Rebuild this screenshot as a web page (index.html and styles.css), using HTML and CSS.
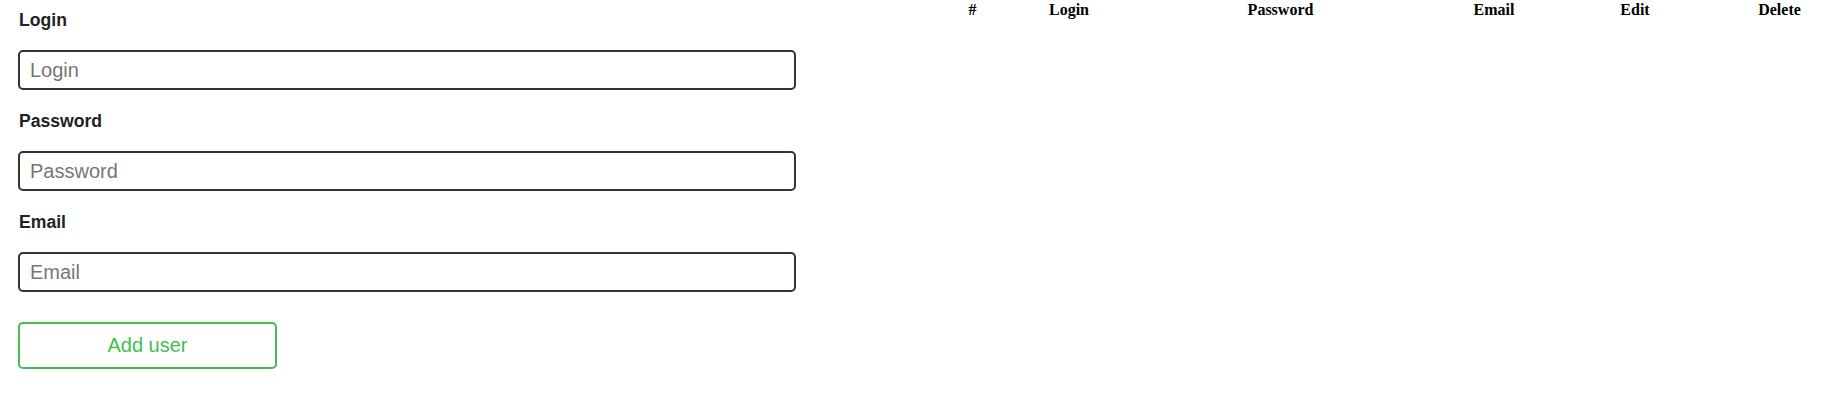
FILE: index.html
```html
<!DOCTYPE html>
<html lang="en">
<head>
<meta charset="utf-8">
<title>Users</title>
<link rel="stylesheet" href="styles.css">
</head>
<body>
<div class="page">
  <form class="user-form">
    <div class="field">
      <label class="field-label" for="login">Login</label>
      <input class="field-input" id="login" type="text" placeholder="Login">
    </div>
    <div class="field">
      <label class="field-label" for="password">Password</label>
      <input class="field-input" id="password" type="password" placeholder="Password">
    </div>
    <div class="field">
      <label class="field-label" for="email">Email</label>
      <input class="field-input" id="email" type="email" placeholder="Email">
    </div>
    <button class="add-btn" type="button">Add user</button>
  </form>
  <div class="table-wrap">
    <table class="users-table">
      <colgroup>
        <col class="col-id">
        <col class="col-login">
        <col class="col-password">
        <col class="col-email">
        <col class="col-edit">
        <col class="col-delete">
      </colgroup>
      <thead>
        <tr>
          <th class="th-id">#</th>
          <th>Login</th>
          <th>Password</th>
          <th>Email</th>
          <th>Edit</th>
          <th>Delete</th>
        </tr>
      </thead>
      <tbody></tbody>
    </table>
  </div>
</div>
</body>
</html>
```

FILE: styles.css
```css
html, body {
  margin: 0;
  padding: 0;
  background: #ffffff;
}

.page {
  display: grid;
  grid-template-columns: 1fr 1fr;
  width: 1828px;
}

.user-form {
  display: flex;
  flex-direction: column;
  align-items: flex-start;
  padding: 10px 0 0 18px;
  font-family: "Liberation Sans", Arial, sans-serif;
}

.field {
  display: flex;
  flex-direction: column;
  margin-bottom: 21px;
}

.field-label {
  font-size: 17.6px;
  line-height: 20px;
  font-weight: bold;
  color: #222222;
  margin-bottom: 20px;
  padding-left: 1px;
}

.field-input {
  box-sizing: border-box;
  width: 778px;
  height: 40px;
  margin: 0;
  padding: 5px 10px;
  border: 2px solid #333333;
  border-radius: 5px;
  font-family: "Liberation Sans", Arial, sans-serif;
  font-size: 20px;
  color: #212529;
  background: #ffffff;
  outline: none;
}

.field-input::placeholder {
  color: #767676;
  opacity: 1;
}

.add-btn {
  box-sizing: border-box;
  width: 259px;
  height: 47px;
  margin-top: 9px;
  padding: 0;
  border: 2px solid #46bd4f;
  border-radius: 5px;
  background: #ffffff;
  color: #46bd4f;
  font-family: "Liberation Sans", Arial, sans-serif;
  font-size: 20px;
  cursor: pointer;
}

.table-wrap {
  min-width: 0;
}

.users-table {
  width: 914px;
  table-layout: fixed;
  border-collapse: separate;
  border-spacing: 0;
  font-family: "Liberation Serif", "Times New Roman", serif;
  font-size: 16px;
  color: #000000;
}

.users-table th {
  padding: 1px;
  font-weight: bold;
  text-align: center;
}

.users-table .th-id {
  padding-left: 6px;
}

.col-id { width: 112px; }
.col-login { width: 86px; }
.col-password { width: 337px; }
.col-email { width: 90px; }
.col-edit { width: 192px; }
.col-delete { width: 97px; }
```
